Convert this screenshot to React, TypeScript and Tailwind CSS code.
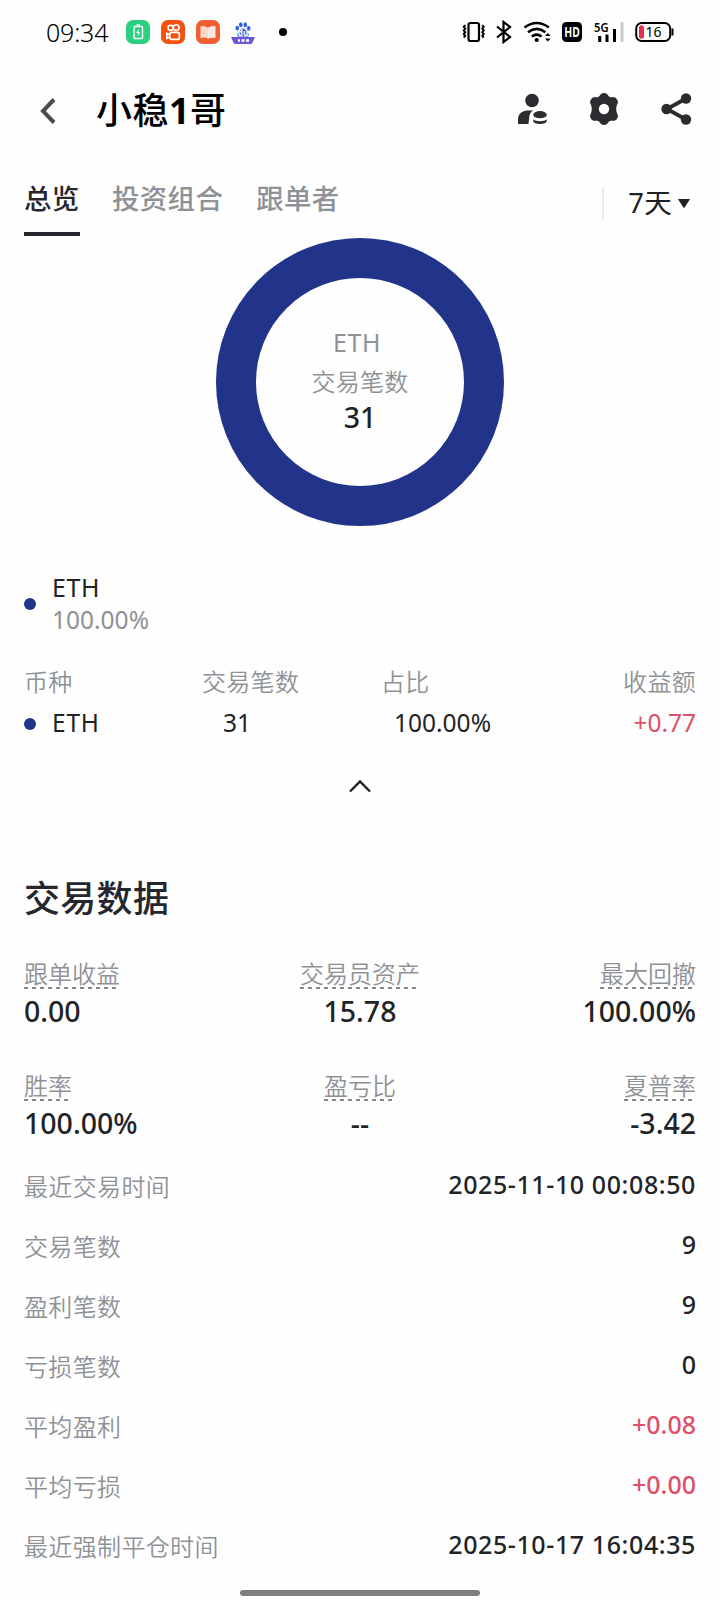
import type { ReactNode } from "react";

const metrics = [
  [
    { label: "跟单收益", value: "0.00" },
    { label: "交易员资产", value: "15.78" },
    { label: "最大回撤", value: "100.00%" },
  ],
  [
    { label: "胜率", value: "100.00%" },
    { label: "盈亏比", value: "--" },
    { label: "夏普率", value: "-3.42" },
  ],
];

const details = [
  { label: "最近交易时间", value: "2025-11-10 00:08:50" },
  { label: "交易笔数", value: "9" },
  { label: "盈利笔数", value: "9" },
  { label: "亏损笔数", value: "0" },
  { label: "平均盈利", value: "+0.08", up: true },
  { label: "平均亏损", value: "+0.00", up: true },
  { label: "最近强制平仓时间", value: "2025-10-17 16:04:35" },
];

function AppBadge({ className, children }: { className: string; children: ReactNode }) {
  return (
    <span className={`flex size-6 items-center justify-center rounded-[7px] ${className}`}>
      <svg className="size-6" viewBox="0 0 24 24" fill="none">
        {children}
      </svg>
    </span>
  );
}

function StatusBar() {
  return (
    <div className="flex h-16 items-center pl-[46px] pr-[46px]">
      <span className="w-20 text-[25px] leading-8 font-[350] tracking-[-0.2px] text-black">09:34</span>
      <div className="flex items-center gap-[11px]">
        <AppBadge className="bg-[#2bcf80]">
          <rect x="8" y="6.5" width="8.5" height="12" rx="1" stroke="#fff" strokeWidth="1.4" />
          <path d="M10.5 5h3.5" stroke="#fff" strokeWidth="1.5" />
          <path d="M12.8 9l-2.6 4h1.8l-.5 3.2 2.7-4.2h-1.8z" fill="#fff" />
        </AppBadge>
        <AppBadge className="bg-[#f4500f]">
          <g stroke="#fff" strokeWidth="1.6">
            <circle cx="9.6" cy="7.8" r="2.6" />
            <circle cx="15.2" cy="7.6" r="2.9" />
            <rect x="8.8" y="12.4" width="9.6" height="7" rx="2" />
            <path d="M8.8 15l-3-1.6v5l3-1.6" />
          </g>
        </AppBadge>
        <AppBadge className="bg-[#ef5f33]">
          <path d="M4.5 6.500q4-1.600 7.500 1.200v11q-3.500-2-7.500-.6z" fill="#fbd9c8" />
          <path d="M12 7.700q3.500-2.700 7.500-1.400v11.700q-4-.8-7.500.7z" fill="#f9e9e2" />
        </AppBadge>
        <svg className="size-6" viewBox="0 0 24 24">
          <g fill="#2f62e0">
            <ellipse cx="6.300" cy="8.200" rx="1.800" ry="2.400" />
            <ellipse cx="9.800" cy="4.800" rx="1.800" ry="2.500" />
            <ellipse cx="14.300" cy="4.800" rx="1.800" ry="2.500" />
            <ellipse cx="17.700" cy="8.400" rx="1.800" ry="2.400" />
            <path d="M12 8.500c-2 0-3 2-4.200 3.200C6.500 13 6 14 6.500 16.500h11c.5-2.500 0-3.500-1.300-4.800C15 10.500 14 8.500 12 8.500z" />
          </g>
          <text x="12" y="16" textAnchor="middle" fontSize="8" fontWeight="700" fill="#fff">du</text>
          <path d="M0 17h24l-2.500 5.500q-.5 1.500-2 1.500h-15q-1.500 0-2-1.500z" fill="#6a58d8" />
          <path d="M7 20.500h2M10.500 20.500h3M15 20.500h3" stroke="#fff" strokeWidth="2.500" />
        </svg>
      </div>
      <span className="ml-6 size-2 rounded-full bg-black" />

      <svg className="ml-auto h-6 w-[212px] shrink-0" viewBox="0 0 212 24" fill="none">
        {/* Vibrate */}
        <g stroke="#000">
          <rect x="6.500" y="3" width="10.500" height="18" rx="2" strokeWidth="2.200" />
          <path d="M3.200 5l-1.400 1.800 1.400 1.800-1.400 1.800 1.400 1.800-1.400 1.800 1.400 1.800-1.400 1.800M20.300 5l1.400 1.800-1.400 1.800 1.400 1.800-1.400 1.800 1.400 1.800-1.400 1.800 1.400 1.800" strokeWidth="2" />
        </g>
        {/* Bluetooth */}
        <path d="M35 6.500l13 10.500-6.500 5V2l6.500 5L35 17.500" stroke="#000" strokeWidth="2.200" />
        {/* Wifi */}
        <g stroke="#000" strokeWidth="2.600">
          <path d="M62.500 7.500q12.200-9 24.400 0" />
          <path d="M66 12.300q8.700-6.700 17.400 0" />
          <path d="M69.800 16.500q4.900-3.700 9.800 0" />
        </g>
        <circle cx="74.700" cy="20" r="2.100" fill="#000" />
        <path d="M83 16l2.800-3 2.800 3zM83 18.500l2.800 3 2.800-3z" fill="#000" />
        {/* HD */}
        <rect x="100" y="2" width="20" height="20" rx="4.500" fill="#000" />
        <text x="110" y="17" textAnchor="middle" fontSize="14" fontWeight="700" fill="#fff" textLength="15.500" lengthAdjust="spacingAndGlyphs">HD</text>
        {/* Signal */}
        <text x="132" y="12.300" fontSize="12.500" fontWeight="600" fill="#000" textLength="14.500" lengthAdjust="spacingAndGlyphs">5G</text>
        <path d="M137.700 16v6M145 14.500V22M152.500 9v13" stroke="#000" strokeWidth="3" />
        <path d="M160 2v20" stroke="#ccc" strokeWidth="3" />
        {/* Battery */}
        <rect x="174.200" y="3" width="34" height="18" rx="5.500" stroke="#000" strokeWidth="2" />
        <path d="M210.500 8.500v7" stroke="#000" strokeWidth="2" />
        <rect x="177" y="5.300" width="5" height="13.500" rx="2.500" fill="#e2314f" />
        <text x="191.500" y="16.900" textAnchor="middle" fontSize="14" fill="#000">16</text>
      </svg>
    </div>
  );
}

function Header() {
  return (
    <div className="flex h-[90px] items-center pl-10 pr-7">
      <svg className="mt-[3px] h-[26px] w-4" viewBox="0 0 16 26" fill="none" stroke="#4b4c4f" strokeWidth="4">
        <path d="M14 1.500L3 13l11 11.500" />
      </svg>
      <h1 className="mt-1 ml-10 text-[36px] leading-[48px] font-medium tracking-[0.5px] text-black">
        小稳<span className="font-bold">1</span>哥
      </h1>
      <div className="ml-auto flex items-center gap-10 text-[#2a2c30]">
        <svg className="size-8" viewBox="0 0 32 32" fill="currentColor">
          <circle cx="16" cy="7.500" r="6.800" />
          <path d="M2 31v-4.500C2 21 6 17.500 11.500 17.500H17c-2.500 1.600-3.800 4.200-3.800 7.200 0 2.300-.7 4-.7 6.300z" />
          <ellipse cx="24" cy="21.700" rx="6.800" ry="3.600" />
          <path d="M17.200 26.500c3 2.200 10.600 2.200 13.600 0v1.300c0 4.400-13.600 4.400-13.600 0z" />
        </svg>
        <svg className="size-8" viewBox="0 0 32 32">
          <path
            fill="currentColor"
            fillRule="evenodd"
            d="M13.200.7q2.800-1.200 5.600 0l2.200 2.800q.8.900 2 .8l3.800-.1q2.700 1.500 3.300 4.800l-1.300 3.500q-.6 1.500-.6 3.500t.6 3.500l1.300 3.500q-.6 3.300-3.300 4.800l-3.800-.1q-1.200-.1-2 .8l-2.200 2.800q-2.800 1.200-5.600 0L11 28.500q-.8-.9-2-.8l-3.800.1q-2.700-1.500-3.300-4.800l1.300-3.500q.6-1.500.6-3.500t-.6-3.500L1.900 9q.6-3.300 3.300-4.800l3.800.1q1.200.1 2-.8zM16 10.800a5.200 5.200 0 1 0 0 10.400 5.200 5.200 0 0 0 0-10.400z"
          />
        </svg>
        <svg className="size-8" viewBox="0 0 32 32" fill="currentColor">
          <path d="M26 5.500L7 16l19 10.500" fill="none" stroke="currentColor" strokeWidth="3.800" />
          <circle cx="26" cy="5.500" r="5.200" />
          <circle cx="6.500" cy="16" r="5.200" />
          <circle cx="26" cy="26.500" r="5.200" />
        </svg>
      </div>
    </div>
  );
}

function Tabs() {
  return (
    <div className="flex h-[82px] items-start px-6 pt-[25px] text-[27.500px] leading-10 font-medium tracking-[0.3px] text-[#8e9296]">
      <div className="w-14 border-b-4 border-[#26262f] pb-[13px] whitespace-nowrap text-[#26262f]">总览</div>
      <div className="ml-8">投资组合</div>
      <div className="ml-[33px]">跟单者</div>
      <div className="mt-1 ml-auto flex items-center font-normal text-[#1f2023]">
        <span className="mr-6 h-8 w-0.5 bg-[#ebebed]" />
        <span className="text-[27.500px]">7天</span>
        <svg className="ml-1.5 mr-1.5 h-[9px] w-3" viewBox="0 0 12 9" fill="currentColor">
          <path d="M.5 0h11q.6 0 .3.6L6.600 8.600q-.6.800-1.200 0L.2.600Q0 0 .5 0z" />
        </svg>
      </div>
    </div>
  );
}

function Donut() {
  return (
    <div className="mx-auto mt-0.5 flex size-72 flex-col items-center rounded-full border-[40px] border-[#213489] pt-11 text-[24px] text-[#8f9194]">
      <span className="mr-1.5 text-[25px] leading-10 tracking-[0.5px]">ETH</span>
      <span className="mt-0.5 leading-9 font-[350] tracking-[0.3px]">交易笔数</span>
      <span className="-mt-px text-[28.500px] leading-9 font-medium text-[#222326]">31</span>
    </div>
  );
}

function Holdings() {
  return (
    <div className="px-6 text-[24.500px] text-[#222326]">
      <div className="mt-[46px] flex items-center">
        <span className="size-3 rounded-full bg-[#213489]" />
        <div className="ml-4 leading-8">
          <div className="-mt-px text-[25px] tracking-[0.6px]">ETH</div>
          <div className="mt-px text-[#8f9194]">100.00%</div>
        </div>
      </div>

      <div className="mt-[26px] grid grid-cols-[178px_179px_1fr_auto] text-[24px] leading-10 font-[350] tracking-[0.3px] text-[#8e9296]">
        <span>币种</span>
        <span>交易笔数</span>
        <span>占比</span>
        <span>收益额</span>
      </div>
      <div className="mt-px grid grid-cols-[178px_179px_1fr_auto] leading-10">
        <span className="flex items-center text-[24.500px] tracking-[0.8px]">
          <span className="mt-0.5 mr-4 size-3 rounded-full bg-[#213489]" />
          ETH
        </span>
        <span className="pl-[21px]">31</span>
        <span className="pl-[13px]">100.00%</span>
        <span className="text-[#dc5069]">+0.77</span>
      </div>

      <svg className="mx-auto mt-9 block h-[14px] w-[22px]" viewBox="0 0 22 14" fill="none" stroke="#1f2023" strokeWidth="2.400">
        <path d="M1 12.500l10-10 10 10" />
      </svg>
    </div>
  );
}

function TradingData() {
  return (
    <div className="mt-[82px] px-6">
      <h2 className="text-[36px] leading-[48px] font-medium tracking-[0.3px] text-[#26262f]">交易数据</h2>

      <div className="mt-[39px] flex flex-col gap-[45px]">
        {metrics.map((row, i) => (
          <div key={i} className="grid grid-cols-3">
            {row.map((m) => (
              <div key={m.label} className="flex flex-col items-start nth-2:items-center nth-3:items-end">
                <span className="bg-[repeating-linear-gradient(90deg,#85888b_0_4px,transparent_4px_8px)] bg-[length:100%_2px] bg-bottom bg-no-repeat pb-[3px] text-[24px] leading-6 font-[350] text-[#8e9296]">
                  {m.label}
                </span>
                <span className="mt-1 text-[28.500px] leading-9 font-medium text-[#222326]">{m.value}</span>
              </div>
            ))}
          </div>
        ))}
      </div>

      <div className="mt-4">
        {details.map((d) => (
          <div key={d.label} className="flex h-[60px] items-center justify-between">
            <span className="text-[24px] font-[350] tracking-[0.35px] text-[#8e9296]">{d.label}</span>
            <span className={`pb-1 text-[25px] font-medium ${d.up ? "text-[#dc5069]" : "text-[#222326]"} ${d.value.length > 8 ? "tracking-[0.6px]" : ""}`}>
              {d.value}
            </span>
          </div>
        ))}
      </div>
    </div>
  );
}

export default function App() {
  return (
    <div className="h-[1600px] w-[720px] overflow-hidden bg-[#fefefe] font-['Noto_Sans','Noto_Sans_CJK_SC',sans-serif]">
      <StatusBar />
      <Header />
      <Tabs />
      <Donut />
      <Holdings />
      <TradingData />
      <div className="mx-auto mt-[13px] h-1.5 w-60 rounded-full bg-[#808080]" />
    </div>
  );
}
